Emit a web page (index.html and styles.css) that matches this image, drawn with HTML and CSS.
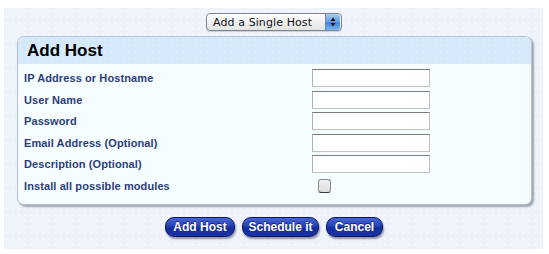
FILE: index.html
```html
<!DOCTYPE html>
<html>
<head>
<meta charset="utf-8">
<link rel="stylesheet" href="styles.css">
</head>
<body>
<div class="page">
  <div class="topbar">
    <div class="select">
      <span class="select-text">Add a Single Host</span>
      <span class="select-arrow">
        <svg width="14" height="16" viewBox="0 0 14 16"><path d="M4.5 7 L7 3.5 L9.5 7 Z M4.5 9 L7 12.5 L9.5 9 Z" fill="#111"/></svg>
      </span>
    </div>
  </div>
  <div class="panel">
    <div class="panel-head">Add Host</div>
    <div class="panel-body">
      <label class="lbl">IP Address or Hostname</label><input class="field" type="text">
      <label class="lbl">User Name</label><input class="field" type="text">
      <label class="lbl">Password</label><input class="field" type="password">
      <label class="lbl">Email Address (Optional)</label><input class="field" type="text">
      <label class="lbl">Description (Optional)</label><input class="field" type="text">
      <label class="lbl">Install all possible modules</label><input class="check" type="checkbox">
    </div>
  </div>
  <div class="actions">
    <button class="btn btn-add">Add Host</button>
    <button class="btn btn-schedule">Schedule it</button>
    <button class="btn btn-cancel">Cancel</button>
  </div>
</div>
</body>
</html>
```
FILE: styles.css
```css
html, body {
  margin: 0;
  padding: 0;
  background: #ffffff;
}
body {
  font-family: "Liberation Sans", Arial, sans-serif;
}
.page {
  margin: 8px 6px 0 4px;
  height: 241px;
  box-sizing: border-box;
  background-color: #eef3fb;
  background-image: radial-gradient(circle, #f4f8fd 0.7px, transparent 1px);
  background-size: 6px 6px;
  padding-top: 5px;
}
.topbar {
  display: flex;
  justify-content: center;
  padding-left: 1px;
}
.select {
  width: 136px;
  height: 18px;
  box-sizing: border-box;
  border: 1px solid #7d8592;
  border-radius: 4px;
  background: linear-gradient(#ffffff, #f0f0f0 50%, #e3e3e3);
  display: flex;
  align-items: center;
  overflow: hidden;
  box-shadow: 0 1px 1px rgba(0,0,0,0.15);
}
.select-text {
  flex: 1;
  font-family: "DejaVu Sans", "Liberation Sans", sans-serif;
  font-size: 11px;
  color: #111;
  padding-left: 6px;
  letter-spacing: 0.1px;
}
.select-arrow {
  width: 14px;
  height: 16px;
  margin-right: 1px;
  border-radius: 0 3px 3px 0;
  background: linear-gradient(#a8cdf5, #5f9ae3 50%, #3f82dc 55%, #7fb5f0);
  border-left: 1px solid #6d89b5;
  display: flex;
}
.panel {
  margin: 5px 11px 0 13px;
  border: 1px solid #b5c1d2;
  border-radius: 7px;
  background: #f6fdff;
  box-shadow: 2px 2px 2px rgba(60,70,90,0.45);
  overflow: hidden;
}
.panel-head {
  height: 27px;
  box-sizing: border-box;
  background-color: #d5e9fb;
  background-image: radial-gradient(circle, #dcedfc 0.7px, transparent 1px);
  background-size: 6px 6px;
  font-weight: bold;
  font-size: 17px;
  color: #000;
  padding: 4px 0 0 9px;
}
.panel-body {
  display: grid;
  grid-template-columns: 288px 118px;
  grid-auto-rows: 18px;
  row-gap: 3.6px;
  align-items: center;
  padding: 5px 0 9px 6px;
}
.lbl {
  font-size: 11px;
  font-weight: bold;
  color: #2c3d7b;
  letter-spacing: 0.1px;
}
.field {
  width: 118px;
  height: 18px;
  box-sizing: border-box;
  margin: 0;
  border: 1px solid #c0c0c0;
  border-top-color: #7a7a7a;
  border-left-color: #b0b0b0;
  background: #fff;
  padding: 0;
}
.check {
  appearance: none;
  -webkit-appearance: none;
  margin: 0 0 0 6px;
  width: 13px;
  height: 14px;
  box-sizing: border-box;
  border: 1px solid #8a8a8a;
  border-bottom-color: #3a3a3a;
  border-radius: 3px;
  background: linear-gradient(#f2f2f2, #dcdcdc);
}
.actions {
  display: flex;
  justify-content: center;
  gap: 7px;
  margin-top: 12px;
  padding-left: 1px;
}
.btn {
  height: 20px;
  padding: 0;
  border: 1px solid #0a1560;
  border-radius: 9px;
  background: linear-gradient(#4866d6, #2440b4 45%, #142c9c 55%, #1a34a8);
  color: #fff;
  font-family: "Liberation Sans", Arial, sans-serif;
  font-weight: bold;
  font-size: 12px;
  box-shadow: 1px 2px 2px rgba(0,0,40,0.4);
  text-shadow: 0 -1px 0 rgba(0,0,40,0.5);
}
.btn-add { width: 70px; }
.btn-schedule { width: 77px; }
.btn-cancel { width: 57px; }
```
